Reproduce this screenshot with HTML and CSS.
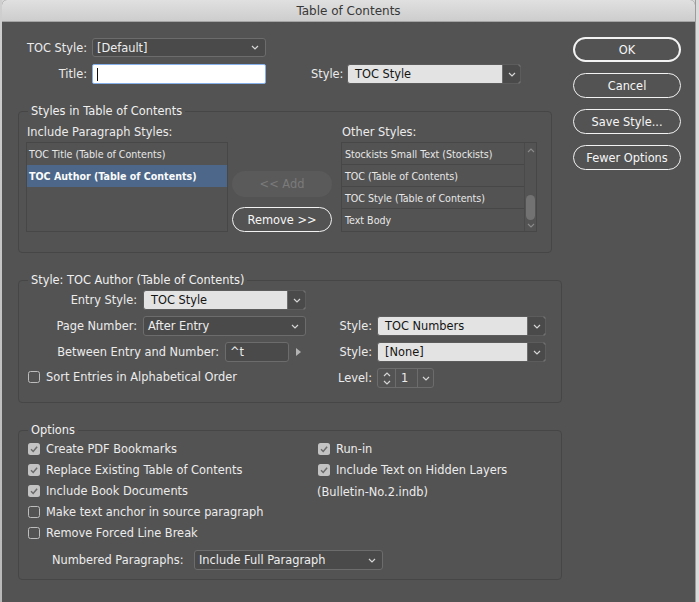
FILE: index.html
```html
<!DOCTYPE html>
<html>
<head>
<meta charset="utf-8">
<title>Table of Contents</title>
<link rel="stylesheet" href="styles.css">
</head>
<body>
<div class="screen">
  <div class="edge-left"></div>
  <div class="dialog">
    <div class="titlebar">Table of Contents</div>
    <div class="content">
      <div class="main">
        <div class="row top1">
          <span class="lbl w69">TOC Style:</span>
          <div class="select dark w174">
            <span>[Default]</span>
            <svg class="chev" viewBox="0 0 8 5" width="8" height="5"><path d="M1 1l3 3 3-3"/></svg>
          </div>
        </div>
        <div class="row top2">
          <span class="lbl w69">Title:</span>
          <div class="text-input"><span class="caret"></span></div>
          <span class="lbl style-lbl">Style:</span>
          <div class="select light w174">
            <span>TOC Style</span>
            <span class="chev-box"><svg class="chev" viewBox="0 0 8 5" width="8" height="5"><path d="M1 1l3 3 3-3"/></svg></span>
          </div>
        </div>

        <fieldset class="group g1">
          <legend>Styles in Table of Contents</legend>
          <div class="styles-grid">
            <div class="col">
              <div class="list-title">Include Paragraph Styles:</div>
              <ul class="list inc">
                <li>TOC Title (Table of Contents)</li>
                <li class="sel">TOC Author (Table of Contents)</li>
              </ul>
            </div>
            <div class="mid">
              <div class="btn disabled">&lt;&lt; Add</div>
              <div class="btn">Remove &gt;&gt;</div>
            </div>
            <div class="col">
              <div class="list-title">Other Styles:</div>
              <div class="list other">
                <ul>
                  <li>Stockists Small Text (Stockists)</li>
                  <li>TOC (Table of Contents)</li>
                  <li>TOC Style (Table of Contents)</li>
                  <li>Text Body</li>
                </ul>
                <div class="scroll">
                  <svg class="sarrow" viewBox="0 0 8 5" width="8" height="5"><path d="M1 4l3-3 3 3"/></svg>
                  <div class="thumb"></div>
                  <svg class="sarrow" viewBox="0 0 8 5" width="8" height="5"><path d="M1 1l3 3 3-3"/></svg>
                </div>
              </div>
            </div>
          </div>
        </fieldset>

        <fieldset class="group g2">
          <legend>Style: TOC Author (Table of Contents)</legend>
          <div class="entry-grid">
            <div class="cell">
              <span class="lbl w111">Entry Style:</span>
              <div class="select light w163">
                <span>TOC Style</span>
                <span class="chev-box"><svg class="chev" viewBox="0 0 8 5" width="8" height="5"><path d="M1 1l3 3 3-3"/></svg></span>
              </div>
            </div>
            <div class="cell"></div>
            <div class="cell">
              <span class="lbl w111">Page Number:</span>
              <div class="select dark w163">
                <span>After Entry</span>
                <svg class="chev" viewBox="0 0 8 5" width="8" height="5"><path d="M1 1l3 3 3-3"/></svg>
              </div>
            </div>
            <div class="cell">
              <span class="lbl w42">Style:</span>
              <div class="select light w169">
                <span>TOC Numbers</span>
                <span class="chev-box"><svg class="chev" viewBox="0 0 8 5" width="8" height="5"><path d="M1 1l3 3 3-3"/></svg></span>
              </div>
            </div>
            <div class="cell">
              <span class="lbl w193">Between Entry and Number:</span>
              <div class="field">^t</div>
              <svg class="tri" viewBox="0 0 5 8" width="5" height="8"><path d="M0 0l5 4-5 4z"/></svg>
            </div>
            <div class="cell">
              <span class="lbl w42">Style:</span>
              <div class="select light w169">
                <span>[None]</span>
                <span class="chev-box"><svg class="chev" viewBox="0 0 8 5" width="8" height="5"><path d="M1 1l3 3 3-3"/></svg></span>
              </div>
            </div>
            <div class="cell check-cell">
              <span class="cb off"></span>
              <span>Sort Entries in Alphabetical Order</span>
            </div>
            <div class="cell">
              <span class="lbl w42">Level:</span>
              <div class="spin">
                <span class="spin-arrows">
                  <svg class="chev" viewBox="0 0 8 5" width="8" height="5"><path d="M1 4l3-3 3 3"/></svg>
                  <svg class="chev" viewBox="0 0 8 5" width="8" height="5"><path d="M1 1l3 3 3-3"/></svg>
                </span>
                <span class="spin-val">1</span>
                <span class="spin-drop"><svg class="chev" viewBox="0 0 8 5" width="8" height="5"><path d="M1 1l3 3 3-3"/></svg></span>
              </div>
            </div>
          </div>
        </fieldset>

        <fieldset class="group g3">
          <legend>Options</legend>
          <div class="opt-grid">
            <div class="opt-col">
              <div class="opt"><span class="cb on"><svg viewBox="0 0 12 12" width="12" height="12"><path d="M3 6.3l2.2 2.2 3.9-4.8"/></svg></span><span>Create PDF Bookmarks</span></div>
              <div class="opt"><span class="cb on"><svg viewBox="0 0 12 12" width="12" height="12"><path d="M3 6.3l2.2 2.2 3.9-4.8"/></svg></span><span>Replace Existing Table of Contents</span></div>
              <div class="opt"><span class="cb on"><svg viewBox="0 0 12 12" width="12" height="12"><path d="M3 6.3l2.2 2.2 3.9-4.8"/></svg></span><span>Include Book Documents</span></div>
              <div class="opt"><span class="cb off"></span><span>Make text anchor in source paragraph</span></div>
              <div class="opt"><span class="cb off"></span><span>Remove Forced Line Break</span></div>
            </div>
            <div class="opt-col right">
              <div class="opt"><span class="cb on"><svg viewBox="0 0 12 12" width="12" height="12"><path d="M3 6.3l2.2 2.2 3.9-4.8"/></svg></span><span>Run-in</span></div>
              <div class="opt"><span class="cb on"><svg viewBox="0 0 12 12" width="12" height="12"><path d="M3 6.3l2.2 2.2 3.9-4.8"/></svg></span><span>Include Text on Hidden Layers</span></div>
              <div class="opt book">(Bulletin-No.2.indb)</div>
            </div>
          </div>
          <div class="row numbered">
            <span class="lbl">Numbered Paragraphs:</span>
            <div class="select dark w189">
              <span>Include Full Paragraph</span>
              <svg class="chev" viewBox="0 0 8 5" width="8" height="5"><path d="M1 1l3 3 3-3"/></svg>
            </div>
          </div>
        </fieldset>
      </div>

      <div class="buttons">
        <div class="btn default">OK</div>
        <div class="btn">Cancel</div>
        <div class="btn">Save Style...</div>
        <div class="btn">Fewer Options</div>
      </div>
    </div>
  </div>
  <div class="edge-right"></div>
</div>
</body>
</html>
```

FILE: styles.css
```css
* { box-sizing: border-box; }
html, body { margin: 0; padding: 0; }
body {
  width: 699px;
  height: 602px;
  overflow: hidden;
  background: #d8d8d8;
  font-family: "DejaVu Sans", "Liberation Sans", sans-serif;
  font-size: 11.4px;
  color: #ececec;
}
.screen { display: flex; height: 602px; }
.edge-left { width: 2px; flex: none; background: linear-gradient(#cfcfcf, #b9b9b9); }
.edge-right { width: 4px; flex: none; background: #dcdcdc; border-left: 1px solid #9c9c9c; }
.dialog {
  width: 693px;
  flex: none;
  background: #535353;
  display: flex;
  flex-direction: column;
  border-radius: 5px 5px 0 0;
  overflow: hidden;
}
.titlebar {
  height: 22px;
  flex: none;
  background: linear-gradient(#e0e0e0, #cdcdcd);
  border-bottom: 1px solid #a4a4a4;
  text-align: center;
  padding-top: 1px;
  line-height: 21px;
  font-size: 12px;
  color: #383838;
}
.content { display: flex; padding: 16px 0 0 16px; }
.main { width: 544px; flex: none; }
.buttons {
  width: 108px;
  margin-left: 11px;
  margin-top: -1px;
  display: flex;
  flex-direction: column;
  gap: 11px;
}
.btn {
  height: 25px;
  border: 1.5px solid #f2f2f2;
  border-radius: 13px;
  color: #f6f6f6;
  display: flex;
  align-items: center;
  justify-content: center;
  white-space: nowrap;
}
.btn.default { border-width: 2px; }
.btn.disabled { border: none; background: #5a5a5a; color: #7b7b7b; height: 26px; }

.row { display: flex; align-items: center; }
.top1 { height: 19px; }
.top2 { height: 20px; margin-top: 7px; }
.lbl { text-align: right; white-space: nowrap; flex: none; }
.w69 { width: 69px; margin-right: 5px; }
.w111 { width: 111px; margin-right: 6px; }
.w193 { width: 193px; margin-right: 6px; }
.w42 { width: 42px; margin-right: 5px; }
.style-lbl { width: 32px; margin-left: 45px; margin-right: 4px; text-align: left; }

.select {
  display: flex;
  align-items: center;
  height: 20px;
  border-radius: 3px;
  flex: none;
  white-space: nowrap;
}
.top1 .select { height: 19px; }
.w174 { width: 174px; }
.w163 { width: 163px; }
.w169 { width: 169px; }
.w189 { width: 189px; }
.select.dark { background: #4a4a4a; border: 1px solid #6c6c6c; color: #eeeeee; padding-left: 4px; }
.select.dark .chev { margin-left: auto; margin-right: 6px; }
.select.light { background: #e3e3e3; border: 1px solid #5c5c5c; color: #151515; padding-left: 7px; }
.chev-box {
  margin-left: auto;
  width: 18px;
  align-self: stretch;
  background: #4a4a4a;
  border-left: 1px solid #6c6c6c;
  border-radius: 0 2px 2px 0;
  display: flex;
  align-items: center;
  justify-content: center;
}
.chev { display: block; flex: none; }
.chev path { fill: none; stroke: #d6d6d6; stroke-width: 1.2; }

.text-input {
  width: 174px;
  height: 20px;
  flex: none;
  background: #ffffff;
  border: 1.5px solid #86b0ea;
  border-radius: 2px;
  display: flex;
  align-items: center;
  padding-left: 4px;
}
.caret { width: 1px; height: 13px; background: #111; }

.group {
  margin: 20px 0 0 0;
  border: 1px solid #464646;
  border-radius: 4px;
  min-width: 0;
}
.group legend { padding: 0 3px; line-height: 14px; color: #f0f0f0; }
.g1 { width: 534px; padding: 7px 9px 20px 7px; }
.g1 legend { margin-left: 2px; }
.g2 { width: 544px; padding: 3px 14px 14px 7px; }
.g2 legend { margin-left: 2px; }
.g3 { width: 544px; padding: 1px 14px 9px 9px; }
.g3 legend { margin-left: 0; }

.styles-grid { display: grid; grid-template-columns: 202px 100px 201px; column-gap: 4px; }
.styles-grid > .col:last-child { margin-left: 5px; }
.list-title { line-height: 14px; margin-bottom: 3px; padding-left: 1px; white-space: nowrap; }
.list {
  height: 90px;
  margin: 0;
  padding: 0;
  list-style: none;
  border: 1px solid #474747;
  font-family: "DejaVu Sans Condensed", "DejaVu Sans", sans-serif;
  font-stretch: condensed;
  font-size: 10.6px;
  color: #e8e8e8;
}
.list li { height: 22px; line-height: 22px; padding-left: 2px; white-space: nowrap; overflow: hidden; }
.list li.sel { background: #4c6789; font-weight: bold; color: #fbfbfb; }
.mid { display: flex; flex-direction: column; justify-content: flex-end; gap: 10px; }
.list.other { display: flex; }
.list.other ul { flex: 1; margin: 0; padding: 0; list-style: none; }
.list.other li { border-bottom: 1px solid #474747; padding-left: 3px; }
.list.other li:last-child { border-bottom: none; }
.scroll {
  width: 12px;
  flex: none;
  border-left: 1px solid #4a4a4a;
  display: flex;
  flex-direction: column;
  align-items: center;
  padding: 5px 0 3px;
}
.sarrow path { fill: none; stroke: #8a8a8a; stroke-width: 1.1; }
.thumb { width: 9px; height: 25px; border-radius: 5px; background: #727272; margin: auto 0 3px; }

.entry-grid {
  display: grid;
  grid-template-columns: 304px 216px;
  grid-template-rows: repeat(4, 20px);
  row-gap: 6px;
}
.cell { display: flex; align-items: center; }
.field {
  width: 64px;
  height: 20px;
  flex: none;
  background: #4a4a4a;
  border: 1px solid #6c6c6c;
  border-radius: 3px;
  padding-left: 4px;
  display: flex;
  align-items: center;
}
.tri { margin-left: 7px; }
.tri path { fill: #b4b4b4; }
.check-cell { padding-left: 2px; margin-top: -2px; }
.check-cell .cb { margin-right: 6px; }

.cb {
  width: 12px;
  height: 12px;
  border-radius: 2.5px;
  flex: none;
  display: block;
}
.cb.off { border: 1px solid #bdbdbd; }
.cb.on { background: #c3c3c3; }
.cb svg { display: block; }
.cb svg path { fill: none; stroke: #6a6a6a; stroke-width: 1.5; }

.spin {
  width: 57px;
  height: 20px;
  flex: none;
  display: flex;
  border: 1px solid #6c6c6c;
  border-radius: 3px;
}
.spin-arrows {
  width: 18px;
  border-right: 1px solid #6c6c6c;
  display: flex;
  flex-direction: column;
  align-items: center;
  justify-content: center;
  gap: 3px;
}
.spin-val { width: 21px; padding-left: 5px; line-height: 18px; }
.spin-drop {
  width: 16px;
  border-left: 1px solid #6c6c6c;
  display: flex;
  align-items: center;
  justify-content: center;
}

.opt-grid { display: grid; grid-template-columns: 289px 1fr; }
.opt { height: 21px; display: flex; align-items: center; white-space: nowrap; }
.opt .cb { margin-right: 6px; }
.opt-col.right .opt .cb { margin-left: 1px; }
.opt.book { height: 23px; }
.numbered { margin-top: 7px; padding-left: 24px; height: 20px; }
.numbered .lbl { margin-right: 9px; width: 133px; text-align: left; }
```
